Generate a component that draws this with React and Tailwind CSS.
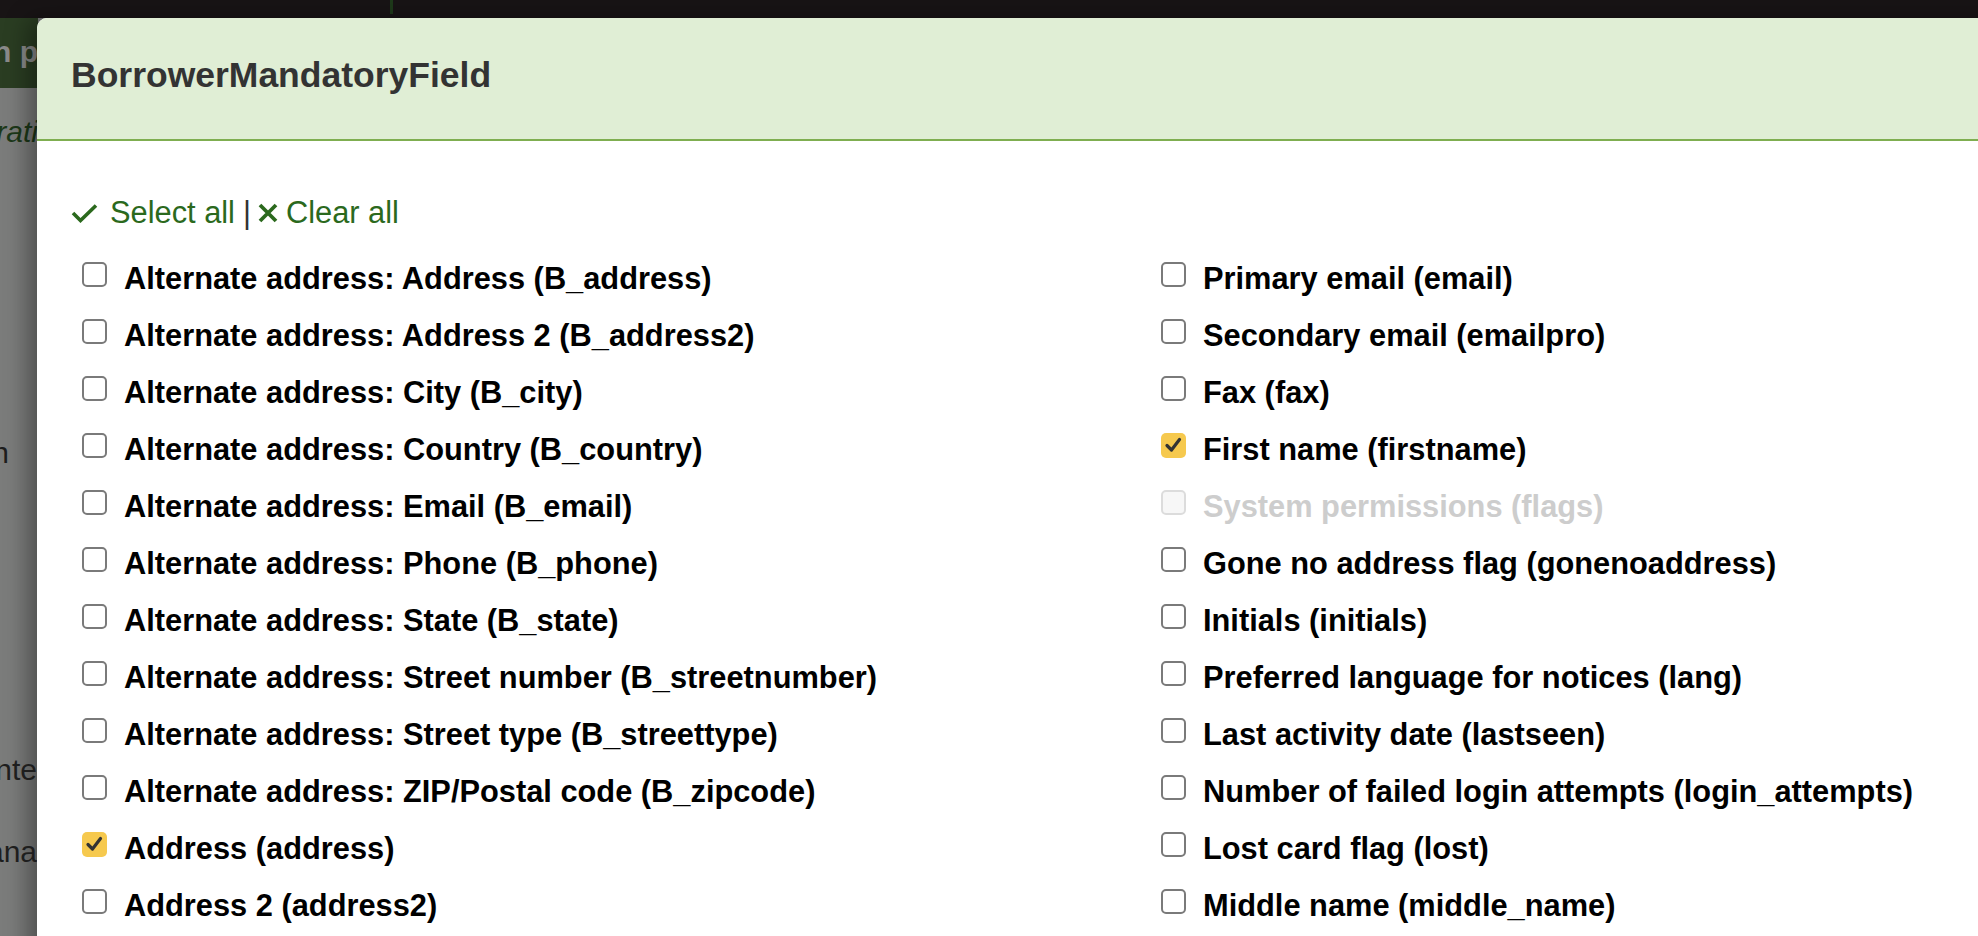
import React from "react";

const left = [
  ["Alternate address: Address (B_address)"],
  ["Alternate address: Address 2 (B_address2)"],
  ["Alternate address: City (B_city)"],
  ["Alternate address: Country (B_country)"],
  ["Alternate address: Email (B_email)"],
  ["Alternate address: Phone (B_phone)"],
  ["Alternate address: State (B_state)"],
  ["Alternate address: Street number (B_streetnumber)"],
  ["Alternate address: Street type (B_streettype)"],
  ["Alternate address: ZIP/Postal code (B_zipcode)"],
  ["Address (address)", "checked"],
  ["Address 2 (address2)"],
];

const right = [
  ["Primary email (email)"],
  ["Secondary email (emailpro)"],
  ["Fax (fax)"],
  ["First name (firstname)", "checked"],
  ["System permissions (flags)", "disabled"],
  ["Gone no address flag (gonenoaddress)"],
  ["Initials (initials)"],
  ["Preferred language for notices (lang)"],
  ["Last activity date (lastseen)"],
  ["Number of failed login attempts (login_attempts)"],
  ["Lost card flag (lost)"],
  ["Middle name (middle_name)"],
];

function Box({ state }) {
  if (state === "checked") {
    return (
      <span className="mb-[10px] flex h-[25px] w-[25px] shrink-0 items-center justify-center rounded-[5px] bg-[#f6c94e]">
        <svg width="25" height="25" viewBox="0 0 25 25">
          <path d="M6 12.5 L10.5 17 L18.5 6.5" fill="none" stroke="#333" strokeWidth="3.2" strokeLinecap="round" strokeLinejoin="round" />
        </svg>
      </span>
    );
  }
  if (state === "disabled") {
    return <span className="mb-[10px] block h-[25px] w-[25px] shrink-0 rounded-[5px] border-2 border-[#dcdcdc] bg-[#f7f7f7]" />;
  }
  return <span className="mb-[10px] block h-[25px] w-[25px] shrink-0 rounded-[5px] border-2 border-[#7a7a7a] bg-white" />;
}

function Row({ label, state }) {
  return (
    <div className="flex h-[57px] items-center gap-[17px]">
      <Box state={state} />
      <span className={"whitespace-nowrap text-[30.8px] font-bold leading-none " + (state === "disabled" ? "text-[#cdcdcd]" : "text-black")}>
        {label}
      </span>
    </div>
  );
}

export default function App() {
  return (
    <div
      className="relative h-[936px] w-[1978px] overflow-hidden bg-[#7b7c7b]"
      style={{ fontFamily: '"Liberation Sans", Arial, sans-serif' }}
    >
      {/* underlying page (dimmed) */}
      <div className="flex h-[18px] bg-[#181415]">
        <div className="ml-[390px] h-[14px] w-[3px] bg-[#1e3a1a]" />
      </div>
      <div className="flex h-[70px] w-[38px] items-center justify-end overflow-hidden bg-[#2a3d22] pb-[4px]">
        <span className="whitespace-nowrap text-[30px] font-bold text-[#8a8a8a]">Koha administration p</span>
      </div>
      <div className="flex h-[62px] w-[37px] items-end justify-end overflow-hidden">
        <span className="mb-[-4px] mr-[-1px] whitespace-nowrap text-[30px] italic text-[#1c3818]">Administrati</span>
      </div>
      <div className="mt-[280px] flex w-[37px] justify-end overflow-hidden">
        <span className="mr-[28px] whitespace-nowrap text-[30px] text-[#1e1e1e]">Koha administration</span>
      </div>

      {/* modal */}
      <div className="absolute left-[37px] top-[18px] h-[1000px] w-[2300px] rounded-tl-[10px] bg-white shadow-[-10px_0_22px_rgba(0,0,0,0.35)]">
        <div className="flex h-[123px] items-center rounded-tl-[10px] border-b-2 border-[#7fae50] bg-[#e0eed5] pb-[6px] pl-[34px]">
          <h1 className="text-[35.5px] font-bold leading-none text-[#333]">BorrowerMandatoryField</h1>
        </div>
        <div className="pl-[34px] pt-[52px]">
          <div className="flex h-[40px] items-center text-[30.8px] leading-none text-[#2b691d]">
            <svg width="27" height="20" viewBox="0 0 27 20" className="mr-[12px]">
              <path d="M2 10 L9.5 17.5 L25 2.5" fill="none" stroke="#2b691d" strokeWidth="3.6" />
            </svg>
            <span>Select all</span>
            <span className="ml-[8px] mr-[7px] text-[#333]">|</span>
            <svg width="20" height="20" viewBox="0 0 20 20" className="mr-[8px]">
              <path d="M2 2 L18 18 M18 2 L2 18" fill="none" stroke="#2b691d" strokeWidth="3.8" />
            </svg>
            <span>Clear all</span>
          </div>
          <div className="ml-[11px] mt-[18px] grid grid-cols-[1079px_1079px]">
            <div className="flex flex-col">
              {left.map(([l, s]) => (
                <Row key={l} label={l} state={s} />
              ))}
            </div>
            <div className="flex flex-col">
              {right.map(([l, s]) => (
                <Row key={l} label={l} state={s} />
              ))}
            </div>
          </div>
        </div>
      </div>

      {/* background labels that peek out at the left edge */}
      <div className="pointer-events-none absolute left-0 top-[747px] flex w-[37px] justify-end overflow-hidden">
        <span className="whitespace-nowrap text-[30px] text-[#1e1e1e]">Printe</span>
      </div>
      <div className="pointer-events-none absolute left-0 top-[829px] flex w-[37px] justify-end overflow-hidden">
        <span className="whitespace-nowrap text-[30px] text-[#1e1e1e]">Mana</span>
      </div>
    </div>
  );
}
